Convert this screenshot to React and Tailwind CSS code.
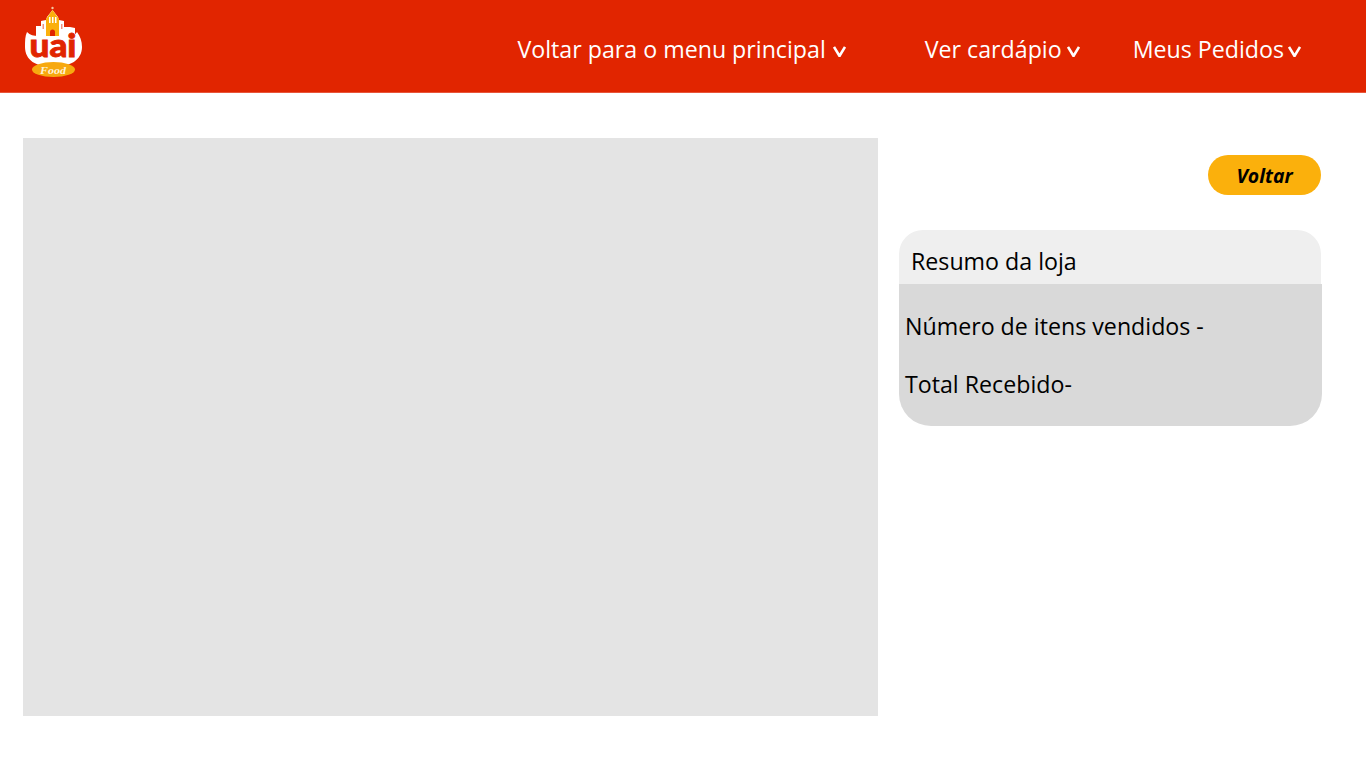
import React from 'react'

const font = { fontFamily: '"Open Sans", sans-serif' }

const Logo = () => (
    <svg width="60" height="72" viewBox="0 0 60 72" className="block">
        {/* church */}
        <circle cx="29.500" cy="2" r="1.200" fill="#f3c9a0" />
        <path d="M13 32V20h5v-5l5-1 1-3 5.500-7 5.500 7 1 3 5 1v6h6l5 1v11z" fill="#fff" />
        <path d="M23 30V13l6.500-9L36 13v17z" fill="#fbb00c" />
        <path d="M26 11h1.500v6H26zM29 11h1.500v6H29zM32 11h1.500v6H32z" fill="#fff" />
        <path d="M27 30v-4a2.500 2.500 0 0 1 5 0v4z" fill="#e12500" />
        <path d="M19.500 18h1.500v5h-1.500zM38 18h1.500v5H38z" fill="#e12500" opacity="0.5" />
        {/* white blob */}
        <path d="M4 26c3 3 7 4 11 4h29c5 0 8-1 10-4 3 4 5 9 5 15 0 13-12 20-29 20S2 54 2 41c0-6 0-11 2-15z" fill="#fff" />
        {/* wordmark */}
        <text x="30" y="51" textAnchor="middle" textLength="47" lengthAdjust="spacingAndGlyphs" fontFamily="Lato, sans-serif" fontWeight="900" fontSize="32" stroke="#e12500" strokeWidth="0.800" fill="#e12500">uai</text>
        {/* yellow banner */}
        <ellipse cx="30.500" cy="63.500" rx="21.500" ry="7.500" fill="#f7a90f" />
        <text x="30" y="67.500" textAnchor="middle" textLength="26" lengthAdjust="spacingAndGlyphs" fontFamily="Liberation Serif, serif" fontStyle="italic" fontWeight="700" fontSize="11" fill="#fff3d8">Food</text>
    </svg>
)

const Chevron = ({ className }) => (
    <svg width="13" height="11" viewBox="0 0 13 11" fill="none" className={"mt-[5px] " + className}>
        <path d="M1 1 6.500 10 12 1" stroke="#fff" strokeWidth="2.600" />
    </svg>
)

export default function App() {
    return (
        <div className="min-h-[768px] bg-white text-black" style={font}>
            {/* HEADER */}
            <header className="h-[93px] bg-[#e12500] flex justify-between pl-[23px] pr-[65px] border-b border-[#e8553a]">
                <div className="mt-[6px]">
                    <Logo />
                </div>
                <nav className="flex items-center pt-[6px] text-white text-[23.2px] leading-8">
                    <a className="flex items-center mr-[79px]">Voltar para o menu principal<Chevron className="ml-[7px]" /></a>
                    <a className="flex items-center mr-[53px]">Ver cardápio<Chevron className="ml-[5px]" /></a>
                    <a className="flex items-center">Meus Pedidos<Chevron className="ml-[4px]" /></a>
                </nav>
            </header>

            {/* BODY */}
            <main className="flex pl-[23px] pt-[45px]">
                <div className="w-[855px] h-[578px] bg-[#e4e4e4]" />
                <div className="w-[423px] ml-[21px]">
                    <div className="flex justify-end pt-[17px] pr-px">
                        <button className="w-[113px] h-[40px] rounded-[20px] bg-[#fbb00c] font-bold italic text-[19.400px] pt-px">Voltar</button>
                    </div>
                    {/* RESUMO */}
                    <div className="mt-[35px]">
                        <div className="w-[422px] h-[54px] bg-[#efefef] rounded-t-[24px] pl-[12px] pt-[15px] text-[23.2px] leading-8">Resumo da loja</div>
                        <div className="h-[142px] bg-[#d9d9d9] rounded-b-[32px] pl-[6px] pt-[26px] text-[23.2px] leading-8">
                            <p>Número de itens vendidos -</p>
                            <p className="mt-[26px]">Total Recebido-</p>
                        </div>
                    </div>
                </div>
            </main>
        </div>
    )
}
